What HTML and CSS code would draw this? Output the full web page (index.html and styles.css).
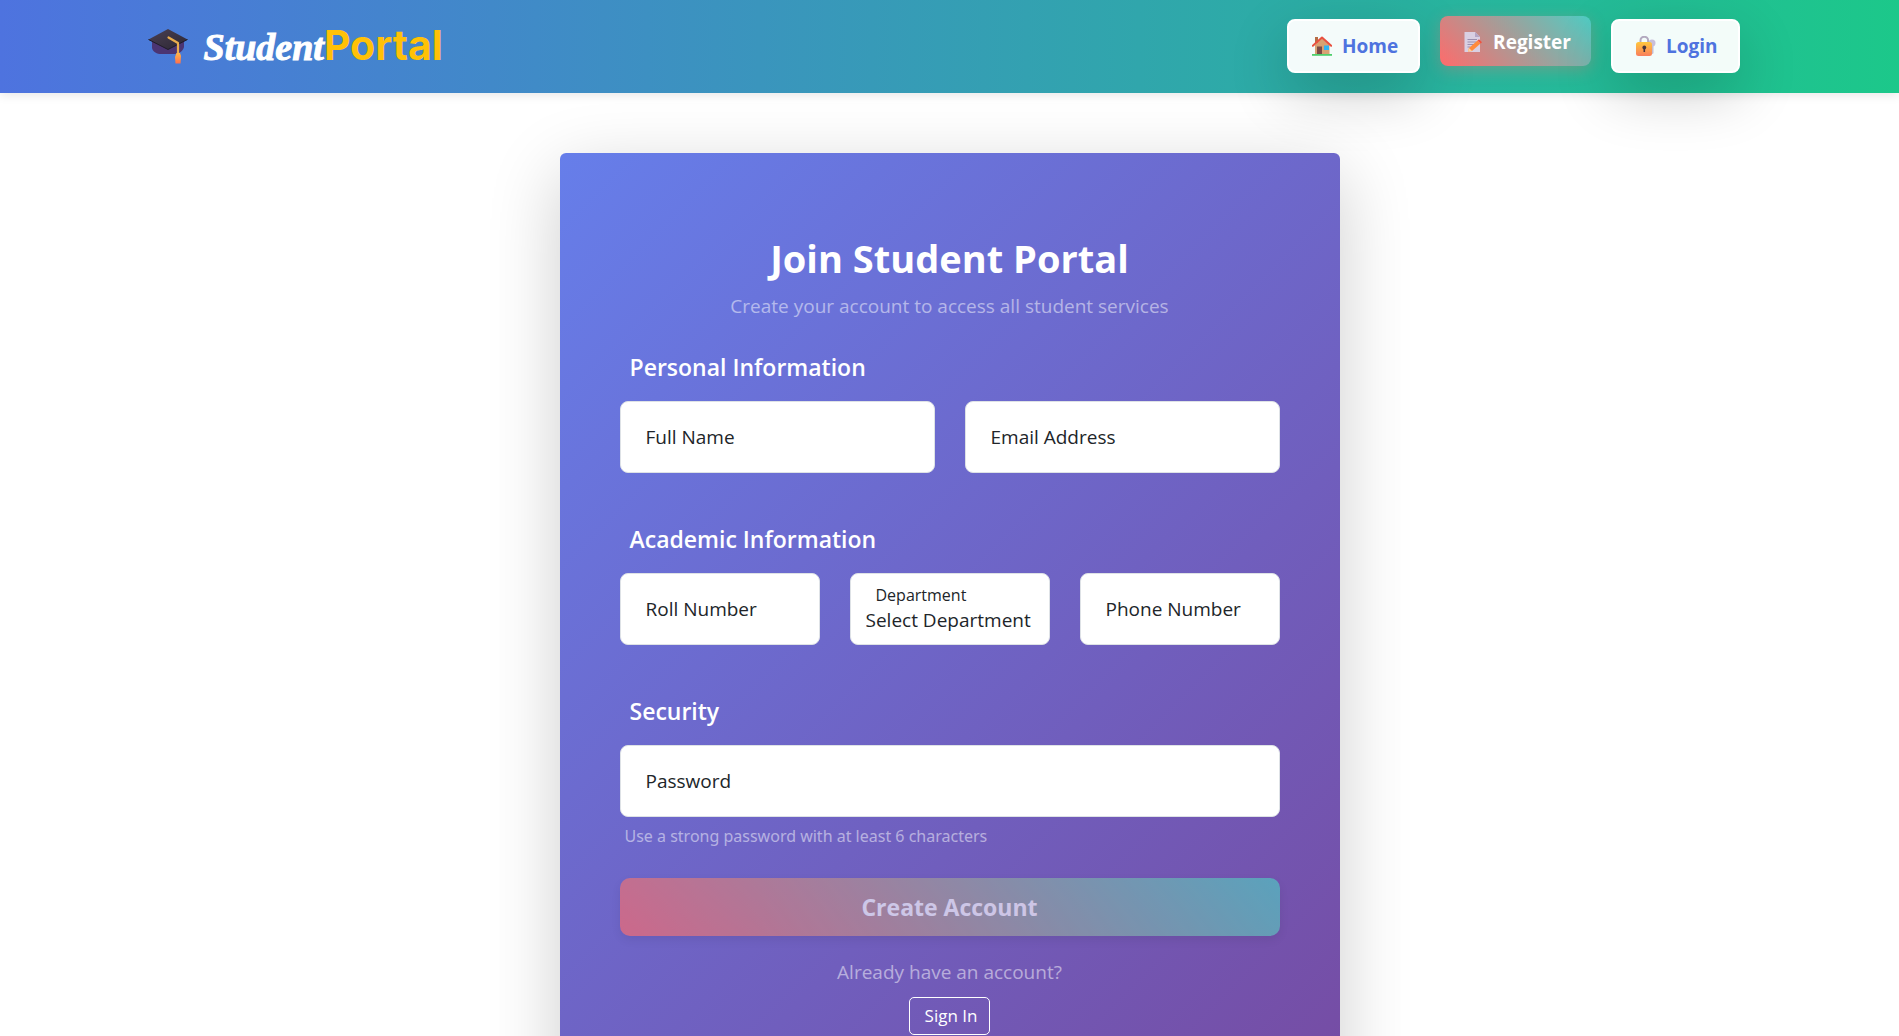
FILE: index.html
```html
<!DOCTYPE html>
<html lang="en">
<head>
<meta charset="utf-8">
<meta name="viewport" content="width=device-width, initial-scale=1">
<title>Join Student Portal</title>
<link rel="stylesheet" href="styles.css">
</head>
<body>
<header class="navbar">
  <div class="navbar-inner">
    <a class="brand" href="#">
      <svg class="brand-icon" viewBox="0 0 40 36" aria-hidden="true">
        <defs>
          <linearGradient id="cap" x1="0" y1="0" x2="1" y2="1"><stop offset="0" stop-color="#4b4053"/><stop offset="1" stop-color="#2b2633"/></linearGradient>
          <linearGradient id="tassel" x1="0" y1="0" x2="0" y2="1"><stop offset="0" stop-color="#ffb648"/><stop offset="1" stop-color="#ff6f4d"/></linearGradient>
        </defs>
        <path d="M4 13v7c1 4 5 6 9 6h14c4 0 8-3 9-7v-6z" fill="#4b3573"/>
        <path d="M20 1 39.500 11.500 20 21.500 .5 11.500z" fill="url(#cap)"/>
        <path d="M.5 11.500 20 21.500 39.500 11.500" fill="none" stroke="#1f1b28" stroke-width="1"/>
        <path d="M20.500 9.500 30 15v11" fill="none" stroke="#e9ac4d" stroke-width="2.200" stroke-linecap="round" stroke-linejoin="round"/>
        <path d="M28.500 25h3.500l1 3-.5 7.500h-5L27 29z" fill="url(#tassel)"/>
      </svg>
      <span class="brand-name"><span class="brand-script">Student</span><span class="brand-accent">Portal</span></span>
    </a>
    <nav class="nav-links">
      <a class="nav-link" href="#">
        <svg class="nav-icon" viewBox="0 0 20 20" aria-hidden="true">
          <path d="M3 1h3v6H3z" fill="#b56d45"/>
          <path d="M3 9l7-7 7.500 7v9.500H3z" fill="#d8a273"/>
          <path d="M5 10.500h5v8H5z" fill="#7b4b46"/>
          <path d="M12 9.500h5v4.500h-5z" fill="#2fb4f5"/>
          <path d="M.8 9.800 10 1.500l9.200 8.300" fill="none" stroke="#e9503f" stroke-width="2" stroke-linecap="round" stroke-linejoin="round"/>
          <path d="M0 18h20v1.800H0z" fill="#4fcf6c"/>
        </svg>
        <span>Home</span>
      </a>
      <a class="nav-link nav-link-active" href="#" aria-current="page">
        <svg class="nav-icon" viewBox="0 0 20 20" aria-hidden="true">
          <path d="M1.500 0H12l5 5v15H1.500z" fill="#d9d0e3"/>
          <path d="M12 0l5 5h-5z" fill="#b4a6c6"/>
          <path d="M4.500 7.500H14M4.500 10h9M4.500 12.500h7M4.500 15h3" stroke="#9b8fae" stroke-width="1"/>
          <path d="M6 16 14.500 8.500l3 3L9 19l-4 .5z" fill="#ff8b3d"/>
          <path d="M14.500 8.500l1.500-1.200 3 3-1.500 1.200z" fill="#f0523f"/>
          <path d="M6 16l3 3-4 .5z" fill="#ffd19a"/>
        </svg>
        <span>Register</span>
      </a>
      <a class="nav-link" href="#">
        <svg class="nav-icon" viewBox="0 0 20 20" aria-hidden="true">
          <defs><linearGradient id="lock" x1="0" y1="0" x2="0" y2="1"><stop offset="0" stop-color="#ffc73c"/><stop offset="1" stop-color="#f97f5d"/></linearGradient></defs>
          <path d="M16 8v8.500" stroke="#c5bdd2" stroke-width="3" stroke-linecap="round"/>
          <circle cx="16" cy="7" r="3.500" fill="#c9bfda"/>
          <path d="M4.500 8V4.500a3.800 3.800 0 0 1 7.600 0V8" fill="none" stroke="#b3aabf" stroke-width="2"/>
          <rect x="0" y="6" width="16" height="14" rx="2.500" fill="url(#lock)"/>
          <circle cx="8.300" cy="11.500" r="1.900" fill="#44333c"/>
          <path d="M7.500 12h1.600v4H7.500z" fill="#44333c"/>
        </svg>
        <span>Login</span>
      </a>
    </nav>
  </div>
</header>

<main class="page">
  <section class="card">
    <h1 class="card-title">Join Student Portal</h1>
    <p class="card-subtitle">Create your account to access all student services</p>
    <form class="form">
      <fieldset class="group">
        <legend class="group-title">Personal Information</legend>
        <div class="row row-two">
          <div class="field">
            <input class="control" id="full-name" type="text">
            <label class="label" for="full-name">Full Name</label>
          </div>
          <div class="field">
            <input class="control" id="email" type="email">
            <label class="label" for="email">Email Address</label>
          </div>
        </div>
      </fieldset>
      <fieldset class="group">
        <legend class="group-title">Academic Information</legend>
        <div class="row row-three">
          <div class="field">
            <input class="control" id="roll" type="text">
            <label class="label" for="roll">Roll Number</label>
          </div>
          <div class="field">
            <select class="control control-select" id="department">
              <option>Select Department</option>
            </select>
            <label class="label label-small" for="department">Department</label>
          </div>
          <div class="field">
            <input class="control" id="phone" type="tel">
            <label class="label" for="phone">Phone Number</label>
          </div>
        </div>
      </fieldset>
      <fieldset class="group group-last">
        <legend class="group-title">Security</legend>
        <div class="row">
          <div class="field">
            <input class="control" id="password" type="password" aria-describedby="password-hint">
            <label class="label" for="password">Password</label>
          </div>
        </div>
        <p class="hint" id="password-hint">Use a strong password with at least 6 characters</p>
      </fieldset>
      <button class="submit" type="submit" disabled>Create Account</button>
    </form>
    <div class="signin">
      <p class="signin-text">Already have an account?</p>
      <a class="signin-link" href="#">Sign In</a>
    </div>
  </section>
</main>
</body>
</html>
```
FILE: styles.css
```css
* {
  box-sizing: border-box;
}

html {
  scrollbar-width: none;
}

body {
  margin: 0;
  background: #fff;
  color: #212529;
  font-family: "Open Sans", "Noto Sans", sans-serif;
  font-size: 19px;
  line-height: 30px;
}

/* Navigation */
.navbar {
  position: relative;
  z-index: 1;
  background: linear-gradient(90deg, #4e73df, #1cc88a);
  box-shadow: 0 2px 10px rgba(0, 0, 0, 0.1);
}

.navbar-inner {
  display: flex;
  align-items: center;
  justify-content: space-between;
  max-width: 1620px;
  min-height: 93px;
  margin: 0 auto;
  padding: 0 20px 1px 8px;
}

.brand {
  display: flex;
  align-items: center;
  gap: 16px;
  color: #fff;
  text-decoration: none;
}

.brand-icon {
  width: 40px;
  height: 36px;
}

.brand-name {
  display: flex;
  align-items: baseline;
  line-height: 48px;
}

.brand-script {
  font-family: "Liberation Serif", serif;
  font-size: 38px;
  font-style: italic;
  font-weight: 700;
  -webkit-text-stroke: 1px #fff;
}

.brand-accent {
  color: #ffc107;
  font-family: Inter, sans-serif;
  font-size: 41px;
  font-weight: 700;
}

.nav-links {
  display: flex;
  align-items: center;
  gap: 20px;
}

.nav-link {
  display: flex;
  align-items: center;
  gap: 10px;
  height: 54px;
  padding: 0 20px 0 23px;
  border: 2px solid #fff;
  border-radius: 8px;
  background: rgba(255, 255, 255, 0.95);
  box-shadow: 0 20px 60px rgba(0, 0, 0, 0.2);
  color: #4e73df;
  font-size: 19px;
  font-weight: 700;
  text-decoration: none;
}

.nav-link-active {
  height: 50px;
  margin-bottom: 10px;
  padding: 2px 20px 0 23px;
  border: 0;
  background: linear-gradient(45deg, #ff6b6b, #4ecdc4);
  box-shadow: 0 4px 16px rgba(255, 107, 107, 0.3);
  color: #fff;
}

.nav-icon {
  width: 20px;
  height: 20px;
}

/* Registration card */
.page {
  padding: 60px 20px;
}

.card {
  max-width: 780px;
  margin: 0 auto;
  padding: 78px 60px;
  border-radius: 6px;
  background: linear-gradient(135deg, #667eea, #764ba2);
  box-shadow: 0 20px 72px rgba(0, 0, 0, 0.2);
}

.card-title {
  margin: 0;
  color: #fff;
  font-size: 38px;
  font-weight: 700;
  line-height: 54px;
  text-align: center;
}

.card-subtitle {
  margin: 6px 0 28px;
  color: rgba(255, 255, 255, 0.5);
  text-align: center;
}

.group {
  min-width: 0;
  margin: 0 0 48px;
  padding: 0;
  border: 0;
}

.group-last {
  margin-bottom: 29px;
}

.group-title {
  padding: 0 10px;
  margin-bottom: 16px;
  color: #fff;
  font-size: 23px;
  font-weight: 600;
  line-height: 36px;
}

.row {
  display: grid;
  gap: 30px;
}

.row-two {
  grid-template-columns: repeat(2, 1fr);
}

.row-three {
  grid-template-columns: repeat(3, 1fr);
}

.field {
  position: relative;
}

.control {
  display: block;
  width: 100%;
  height: 72px;
  padding: 30px 15px 10px;
  border: 1px solid #dee2e6;
  border-radius: 8px;
  background: #fff;
  color: #212529;
  font: inherit;
}

.control-select {
  padding: 30px 10px 8px 15px;
  appearance: none;
}

.label {
  position: absolute;
  top: 21px;
  left: 26px;
  pointer-events: none;
}

.label-small {
  top: 12px;
  font-size: 16px;
  line-height: 20px;
}

.hint {
  margin: 6px 0 0 5px;
  color: rgba(255, 255, 255, 0.5);
  font-family: "Noto Sans", sans-serif;
  font-size: 16px;
  line-height: 26px;
}

.submit {
  display: block;
  width: 100%;
  height: 58px;
  border: 0;
  border-radius: 10px;
  background: linear-gradient(45deg, #ff6b6b, #4ecdc4);
  box-shadow: 0 4px 8px rgba(0, 0, 0, 0.1);
  color: #fff;
  font: inherit;
  font-size: 23px;
  font-weight: 700;
  opacity: 0.65;
}

.signin {
  margin-top: 21px;
  text-align: center;
}

.signin-text {
  margin: 0 0 10px;
  color: rgba(255, 255, 255, 0.5);
}

.signin-link {
  display: inline-block;
  padding: 5px 12px 5px 15px;
  border: 1px solid #fff;
  border-radius: 5px;
  color: #fff;
  font-size: 17px;
  line-height: 26px;
  text-decoration: none;
}
```
